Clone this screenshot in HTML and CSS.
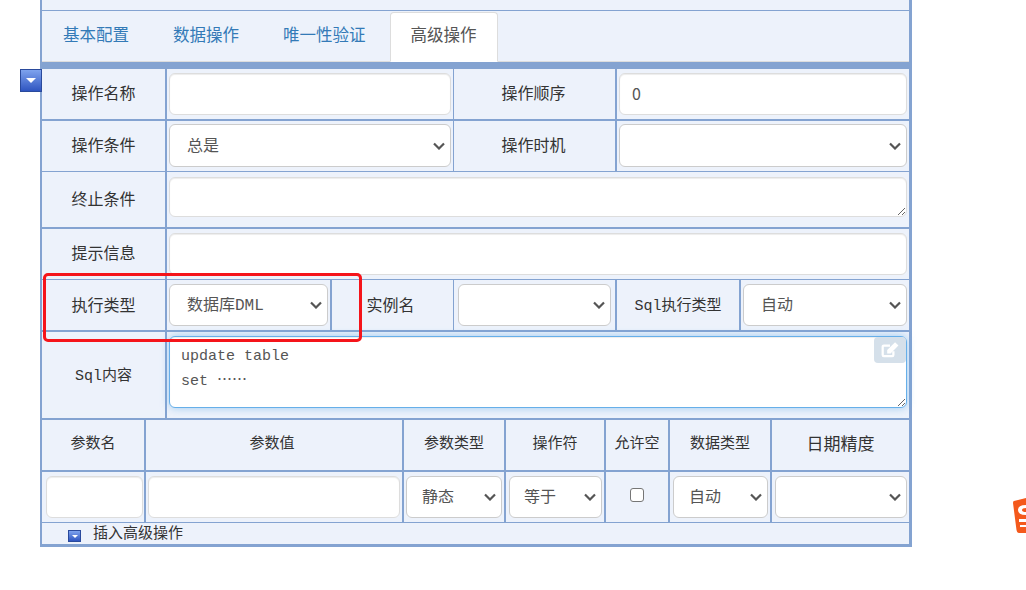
FILE: index.html
```html
<!DOCTYPE html>
<html lang="zh-CN">
<head>
  <meta charset="UTF-8" />
  <title>高级操作</title>
  <link rel="stylesheet" href="styles.css">
</head>
<body>

<div class="panel">
  <div class="top-strip"></div>

  <ul class="tabs">
    <li><a href="#">基本配置</a></li>
    <li><a href="#">数据操作</a></li>
    <li><a href="#">唯一性验证</a></li>
    <li class="active"><a href="#">高级操作</a></li>
  </ul>

  <div class="row row-main">
    <div class="cell label">操作名称</div>
    <div class="cell thin"><input type="text" /></div>
    <div class="cell label mid">操作顺序</div>
    <div class="cell end"><input type="text" value="0" /></div>
  </div>

  <div class="row row-main row-thin">
    <div class="cell label">操作条件</div>
    <div class="cell thin up"><select><option>总是</option></select></div>
    <div class="cell label mid">操作时机</div>
    <div class="cell end up"><select><option></option></select></div>
  </div>

  <div class="row row-main row-tall">
    <div class="cell label">终止条件</div>
    <div class="cell span3 end down"><textarea rows="2"></textarea></div>
  </div>

  <div class="row row-main row-thin">
    <div class="cell label">提示信息</div>
    <div class="cell span3 end"><input type="text" /></div>
  </div>

  <div class="row row-exec">
    <div class="cell label">执行类型</div>
    <div class="cell"><select><option>数据库DML</option></select></div>
    <div class="cell label name-label">实例名</div>
    <div class="cell wide"><select><option></option></select></div>
    <div class="cell label small">Sql执行类型</div>
    <div class="cell end"><select><option>自动</option></select></div>
  </div>

  <div class="row row-sql">
    <div class="cell label small">Sql内容</div>
    <div class="cell end sql-cell">
      <textarea class="sql">update table
set ⋯⋯</textarea>
      <button type="button" class="edit-btn">
        <svg width="18" height="18" viewBox="0 0 16 16">
          <path d="M11 9v3.500a1 1 0 0 1-1 1H2.500a1 1 0 0 1-1-1V5a1 1 0 0 1 1-1H8" fill="none" stroke="#fff" stroke-width="2"/>
          <path d="M5.500 8 12.500 1 15.500 4 8.500 11H5.500z" fill="#fff"/>
        </svg>
      </button>
    </div>
  </div>

  <div class="row row-params">
    <div class="cell label small head">参数名</div>
    <div class="cell label small head value-head">参数值</div>
    <div class="cell label small head">参数类型</div>
    <div class="cell label small head">操作符</div>
    <div class="cell label small head">允许空</div>
    <div class="cell label small head">数据类型</div>
    <div class="cell label big head end">日期精度</div>
  </div>

  <div class="row row-params row-thin">
    <div class="cell first"><input type="text" /></div>
    <div class="cell"><input type="text" /></div>
    <div class="cell narrow"><select><option>静态</option></select></div>
    <div class="cell shift op"><select><option>等于</option></select></div>
    <div class="cell check"><input type="checkbox" /></div>
    <div class="cell shift narrow"><select><option>自动</option></select></div>
    <div class="cell shift end"><select><option></option></select></div>
  </div>

  <div class="footer">
    <span class="toggle toggle-small"></span>
    <span>插入高级操作</span>
  </div>
</div>

<!-- things lying over the page -->
<span class="toggle toggle-side"></span>
<div class="red-box"></div>
<svg class="float-logo" width="13" height="36" viewBox="0 0 13 36">
  <path d="M1 4 13 1V36H6Q4 36 3.500 33L0 6Q0 4 1 4Z" fill="#f4591c"/>
  <path d="M13 8Q5 8 5 13 5 18 13 18V15Q9 15 9 13 9 11 13 11ZM6 22H13V25H6ZM7 28H13V30H7Z" fill="#fff"/>
</svg>

</body>
</html>
```

FILE: styles.css
```css
* { box-sizing: border-box; }

body {
  margin: 0;
  height: 590px;
  overflow: hidden;
  background: white;
  font-family: "Liberation Mono", "Noto Sans CJK SC", monospace;
  font-size: 16px;
  color: #333;
}

.panel {
  width: 872px;
  margin-left: 40px;
  background: #edf2fb;
  border: solid #84a3d1;
  border-width: 0 3px 3px 2px;
}

.top-strip {
  height: 11px;
  border-bottom: 1px solid #84a3d1;
}

/* Tabs */
.tabs {
  display: flex;
  gap: 2px;
  height: 58px;
  margin: 0;
  padding: 1px 0 0;
  list-style: none;
  border-bottom: 7px solid #84a3d1;
  box-shadow: inset 0 -1px 0 #ddd;
}

.tabs a {
  display: block;
  height: 50px;
  padding: 12px 20px;
  font-size: 16.5px;
  line-height: 24px;
  color: #337ab7;
  text-decoration: none;
  border: 1px solid transparent;
  border-radius: 4px 4px 0 0;
}

.tabs .active {
  margin-left: 1px;
}

.tabs .active a {
  background: white;
  color: #555;
  border-color: #ddd #ddd transparent;
}

/* Rows */
.row {
  display: grid;
  height: 52px;
  border-bottom: 2px solid #84a3d1;
}

.row-main { grid-template-columns: 125px 287px 163px 292px; }
.row-exec { grid-template-columns: 125px 165px 122px 163px 124px 168px; }
.row-sql { grid-template-columns: 125px 742px; height: 88px; }
.row-params { grid-template-columns: 104px 258px 102px 100px 64px 102px 137px; }

.row-tall { height: 57px; }
.row-thin { height: 51px; border-bottom-width: 1px; }

.cell {
  display: flex;
  align-items: stretch;
  min-width: 0;
  padding: 4px 2px;
  border-right: 2px solid #84a3d1;
}

.label {
  align-items: center;
  justify-content: center;
  padding-bottom: 8px;
}

.row-exec .label { padding-bottom: 6px; }
.row-sql .label { padding-bottom: 6px; }

.head { padding-bottom: 10px; }
.value-head { padding-right: 6px; }
.mid { padding-right: 4px; }
.up { padding-top: 3px; }
.down { padding-top: 5px; }
.small { font-size: 15px; }
.big { font-size: 17px; }
.thin { border-right-width: 1px; }
.end { border-right: none; }
.span3 { grid-column: span 3; }
.wide { padding: 4px; }
.name-label { border-right-width: 1px; padding-right: 6px; }
.first { padding: 4px 1px 4px 4px; }
.narrow select { padding-left: 15px; }
.shift { padding: 4px 2px 4px 3px; }
.op select { padding-left: 14px; }
.check { align-items: center; justify-content: center; padding-bottom: 8px; }

/* Form controls */
input[type="text"], select, textarea {
  width: 100%;
  margin: 0;
  padding: 0 13px;
  font-family: inherit;
  font-size: 16px;
  color: #555;
  background-color: white;
  border: 1px solid #ccc;
  border-radius: 6px;
}

select {
  appearance: none;
  padding: 2px 24px 0 17px;
  background-image: url("data:image/svg+xml,%3Csvg xmlns='http://www.w3.org/2000/svg' width='12' height='8'%3E%3Cpath d='M1 1.500 6 6.500 11 1.500' fill='none' stroke='%23555' stroke-width='2.200'/%3E%3C/svg%3E");
  background-repeat: no-repeat;
  background-position: right 5px center;
}

input[type="text"] {
  padding: 0 12px 2px;
  font-family: "Noto Sans CJK SC", sans-serif;
  border-color: #ddd;
  box-shadow: inset 0 1px 1px rgba(0,0,0,0.075);
}

textarea {
  display: block;
  height: 40px;
  border-color: #ddd;
  box-shadow: inset 0 1px 1px rgba(0,0,0,0.075);
  resize: vertical;
}

input[type="checkbox"] {
  appearance: none;
  width: 14px;
  height: 14px;
  margin: 0;
  background: white;
  border: 1.500px solid #767676;
  border-radius: 3px;
}

.sql-cell {
  position: relative;
  padding-bottom: 10px;
}

textarea.sql {
  height: 72px;
  padding: 7px 11px;
  font-size: 15px;
  line-height: 25px;
  border-color: #66afe9;
  box-shadow: inset 0 1px 1px rgba(0,0,0,0.075), 0 0 8px rgba(102,175,233,0.6);
}

.edit-btn {
  position: absolute;
  top: 5px;
  right: 3px;
  display: flex;
  align-items: center;
  justify-content: center;
  width: 32px;
  height: 26px;
  padding: 0;
  background: #d5e0ea;
  border: none;
  border-radius: 4px;
}

/* Footer */
.footer {
  display: flex;
  align-items: center;
  gap: 12px;
  height: 21px;
  padding: 0 0 3px 26px;
  font-size: 15px;
}

.toggle {
  position: relative;
  display: block;
  background: linear-gradient(to bottom, #7ea3ee, #2f55c0);
  border: 1px solid #2a4a9c;
}

.toggle::after {
  content: "";
  position: absolute;
  left: 50%;
  top: 50%;
  margin: -3px 0 0 -5px;
  border: solid transparent;
  border-width: 5px 5px 0;
  border-top-color: white;
}

.toggle-small {
  width: 13px;
  height: 12px;
  margin-top: 8px;
}

.toggle-small::after {
  margin: -1px 0 0 -3px;
  border-width: 3px 3px 0;
}

.toggle-side {
  position: absolute;
  left: 20px;
  top: 69px;
  width: 22px;
  height: 23px;
}

.red-box {
  position: absolute;
  left: 43px;
  top: 273px;
  width: 319px;
  height: 69px;
  border: 3px solid #f5141a;
  border-radius: 5px;
}

.float-logo {
  position: absolute;
  left: 1013px;
  top: 497px;
}
```
